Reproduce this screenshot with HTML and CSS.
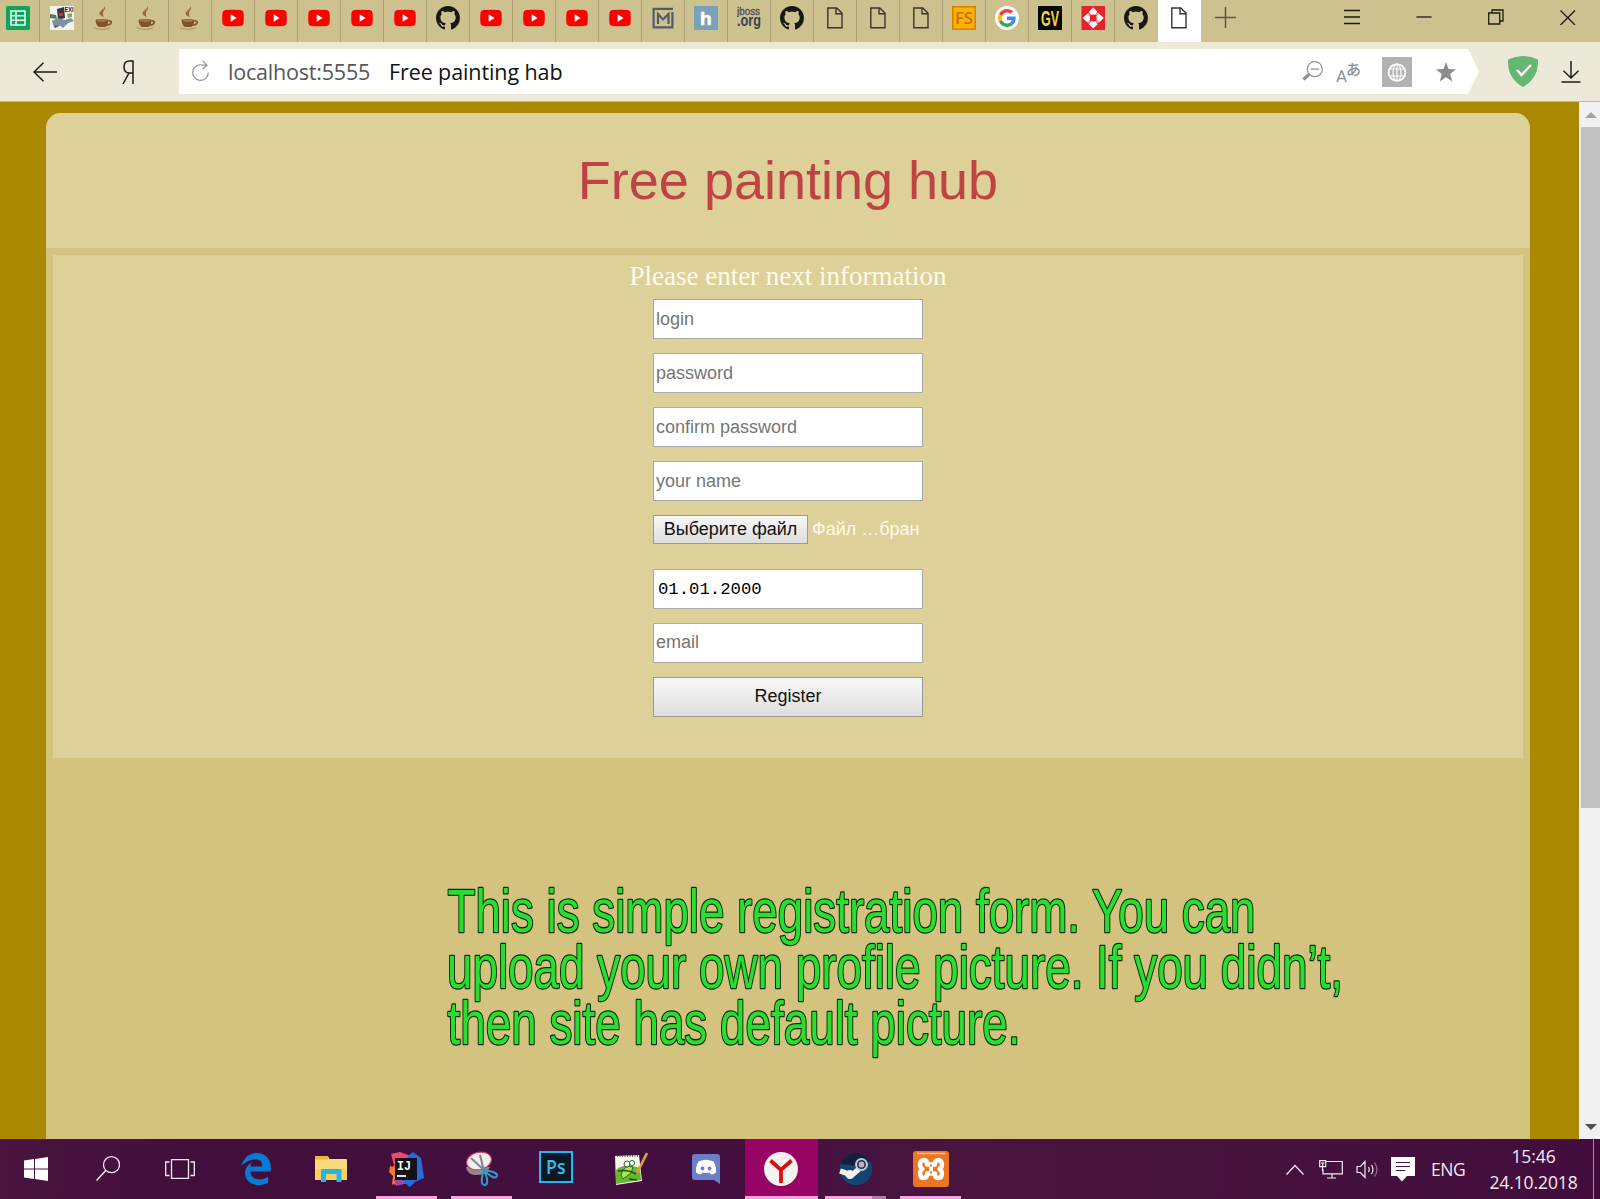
FILE: index.html
```html
<!DOCTYPE html>
<html lang="en">
<head>
<meta charset="utf-8">
<title>Free painting hab</title>
<link rel="stylesheet" href="styles.css">
</head>
<body>
<svg class="defs" width="0" height="0" aria-hidden="true">
  <symbol id="cup" viewBox="0 0 24 24">
    <path d="M12.500 0c2 3-1 4-1.500 6.500-.4 2 .5 3 .5 4.500-3-1.500-5-2.700-3.500-5C9.500 3.800 12.500 3 12.500 0z" fill="#9a6a3c"/>
    <path d="M3.500 14c3-1.200 10-1.200 13 0-.3 4-1.500 6.500-3.500 7h-6C5 20 3.800 17.500 3.500 14z" fill="#80542b"/>
    <path d="M16.500 15c4-1 4 3.500-1.500 4.200" fill="none" stroke="#80542b" stroke-width="1.600"/>
    <ellipse cx="10" cy="14.500" rx="5" ry="1.200" fill="#a9794b"/>
    <path d="M1.500 21c4 2.500 13 2.500 17 0-1 3.500-16 3.500-17 0z" fill="#a37a4c"/>
  </symbol>
  <symbol id="yt" viewBox="0 0 24 24">
    <path d="M4.200 4q7.800-.5 15.600 0 2.500.3 2.800 3 .4 5 0 10-.3 2.700-2.800 3-7.800.5-15.600 0-2.500-.3-2.800-3-.4-5 0-10Q1.700 4.300 4.200 4z" fill="#fd0000"/>
    <path d="M9.700 8.200v7.600l5.900-3.800z" fill="#fff"/>
  </symbol>
  <symbol id="gh" viewBox="0 0 16 16">
    <path fill="#1b1813" d="M8 0C3.580 0 0 3.580 0 8c0 3.540 2.290 6.530 5.470 7.590.4.070.55-.17.55-.38 0-.19-.01-.82-.01-1.490-2.010.37-2.530-.49-2.690-.94-.09-.23-.48-.94-.82-1.130-.28-.15-.68-.52-.01-.53.63-.01 1.080.58 1.230.82.72 1.210 1.870.87 2.330.66.07-.52.28-.87.51-1.070-1.780-.2-3.640-.89-3.640-3.950 0-.87.31-1.590.82-2.150-.08-.2-.36-1.020.08-2.120 0 0 .67-.21 2.200.82.64-.18 1.320-.27 2-.27s1.360.09 2 .27c1.530-1.040 2.200-.82 2.200-.82.44 1.100.16 1.920.08 2.120.51.56.82 1.270.82 2.150 0 3.070-1.870 3.750-3.650 3.950.29.25.54.73.54 1.480 0 1.070-.01 1.930-.01 2.200 0 .21.150.46.55.38A8.010 8.010 0 0 0 16 8c0-4.420-3.580-8-8-8z"/>
  </symbol>
  <symbol id="doc" viewBox="0 0 24 24">
    <path d="M4.800 2h9l5.200 5v14.700H4.800zM13 2v5.800h6" fill="none" stroke="#3a352a" stroke-width="1.400"/>
  </symbol>
</svg>

<div class="screen">
  <nav class="tabs">
    <div class="tab tab-first"><svg viewBox="0 0 24 24"><rect width="24" height="24" rx="1.500" fill="#0fa45c"/><path d="M5 5h14v14H5zM5 9.700h14M5 14.300h14M10 5v14" fill="none" stroke="#e8f8ee" stroke-width="1.600"/></svg></div>
    <div class="tab tab-second"><svg viewBox="0 0 24 24"><rect width="24" height="24" fill="#f1f1ef"/><path d="M7 3l7-2 1 11-7 2z" fill="#353849"/><path d="M0 8l6 1 1 4-7-1z" fill="#567a55"/><path d="M9 7h4v3H9z" fill="#e22b2b"/><path d="M2 15l6-3 7 2 6-2 3 3-6 2-5 5-3-3-6 2z" fill="#7d8fa0"/><path d="M17 8l5-1v4l-4 1z" fill="#78b04a"/><path d="M4 20l7-1-6 3z" fill="#3d5366"/><text x="14.500" y="6" font-family="Liberation Sans" font-size="6.500" font-weight="700" fill="#222" textLength="9" lengthAdjust="spacingAndGlyphs">EXI</text></svg></div>
    <div class="tab"><svg><use href="#cup"/></svg></div>
    <div class="tab"><svg><use href="#cup"/></svg></div>
    <div class="tab"><svg><use href="#cup"/></svg></div>
    <div class="tab"><svg><use href="#yt"/></svg></div>
    <div class="tab"><svg><use href="#yt"/></svg></div>
    <div class="tab"><svg><use href="#yt"/></svg></div>
    <div class="tab"><svg><use href="#yt"/></svg></div>
    <div class="tab"><svg><use href="#yt"/></svg></div>
    <div class="tab"><svg><use href="#gh"/></svg></div>
    <div class="tab"><svg><use href="#yt"/></svg></div>
    <div class="tab"><svg><use href="#yt"/></svg></div>
    <div class="tab"><svg><use href="#yt"/></svg></div>
    <div class="tab"><svg><use href="#yt"/></svg></div>
    <div class="tab"><svg viewBox="0 0 24 24"><path d="M22 2.800H2.600v18.600h18.800V6M7 18V8l5 5.500L17.500 8v10" fill="none" stroke="#535a67" stroke-width="2.200"/></svg></div>
    <div class="tab"><svg viewBox="0 0 24 24"><rect width="24" height="24" fill="#77a2b8"/><text x="6" y="18.500" font-family="Liberation Sans" font-weight="700" font-size="19" fill="#fff" stroke="#fff" stroke-width=".6">h</text></svg></div>
    <div class="tab"><svg viewBox="0 0 24 24"><text x="0" y="9" font-family="Liberation Sans" font-size="11.500" fill="#454b54" stroke="#454b54" stroke-width=".3" textLength="23" lengthAdjust="spacingAndGlyphs">jboss</text><text x="0" y="19.500" font-family="Liberation Sans" font-size="16" font-weight="700" fill="#39414d" textLength="24" lengthAdjust="spacingAndGlyphs">.org</text></svg></div>
    <div class="tab"><svg><use href="#gh"/></svg></div>
    <div class="tab"><svg><use href="#doc"/></svg></div>
    <div class="tab"><svg><use href="#doc"/></svg></div>
    <div class="tab"><svg><use href="#doc"/></svg></div>
    <div class="tab"><svg viewBox="0 0 24 24"><rect x=".8" y=".8" width="22.400" height="22.400" fill="#fdb400" stroke="#e08000" stroke-width="1.600"/><text x="3" y="18" font-family="Open Sans" font-size="16.500" font-weight="600" fill="#c96a08" textLength="18" lengthAdjust="spacingAndGlyphs">FS</text></svg></div>
    <div class="tab"><svg viewBox="-8 -8 64 64"><circle cx="24" cy="24" r="32" fill="#fff"/><path fill="#EA4335" d="M24 9.500c3.540 0 6.710 1.220 9.210 3.600l6.850-6.850C35.900 2.380 30.470 0 24 0 14.620 0 6.510 5.380 2.560 13.220l7.980 6.190C12.430 13.720 17.740 9.500 24 9.500z"/><path fill="#4285F4" d="M46.980 24.550c0-1.570-.15-3.090-.38-4.550H24v9.020h12.940c-.58 2.960-2.260 5.480-4.780 7.180l7.730 6c4.510-4.180 7.090-10.360 7.090-17.650z"/><path fill="#FBBC05" d="M10.530 28.590c-.48-1.450-.76-2.990-.76-4.590s.27-3.140.76-4.590l-7.980-6.190C.92 16.460 0 20.120 0 24c0 3.880.92 7.540 2.560 10.780l7.970-6.190z"/><path fill="#34A853" d="M24 48c6.480 0 11.930-2.130 15.890-5.810l-7.730-6c-2.150 1.450-4.920 2.300-8.160 2.300-6.260 0-11.570-4.220-13.470-9.910l-7.980 6.190C6.510 42.620 14.620 48 24 48z"/></svg></div>
    <div class="tab"><svg viewBox="0 0 24 24"><rect width="24" height="24" fill="#060603"/><text x="3" y="20" font-family="Liberation Sans" font-weight="700" font-size="22" fill="#f0dc3c" textLength="18" lengthAdjust="spacingAndGlyphs">GV</text></svg></div>
    <div class="tab"><svg viewBox="0 0 24 24"><rect x=".5" width="23.500" height="24" fill="#e6222c"/><path d="M12.200 1.500l4.300 4.200-2.300 3.300h-4L8 5.700zM12.200 22.500l4.300-4.200-2.300-3.300h-4L8 18.300zM1.700 12l4.500-4.300 3 2.300v4l-3 2.300zM22.800 12l-4.500-4.300-3 2.300v4l3 2.300z" fill="#fff"/><circle cx="12.200" cy="12" r="3.400" fill="#e6222c"/><path d="M7 7l2 2M17.400 7l-2 2M7 17l2-2M17.400 17l-2-2" stroke="#f6b0b3" stroke-width="1.400"/></svg></div>
    <div class="tab tab-last"><svg><use href="#gh"/></svg></div>
    <div class="tab tab-active"><svg><use href="#doc"/></svg></div>
    <svg class="new-tab" viewBox="0 0 20 20"><path d="M10 0v20M0 10h20" stroke="#5e563d" stroke-width="1.400"/></svg>
    <div class="window-controls">
      <svg viewBox="0 0 16 16"><path d="M0 1.500h16M0 8h16M0 14.500h16" stroke="#1e1b12" stroke-width="1.300"/></svg>
      <svg viewBox="0 0 16 16"><path d="M.5 8h15" stroke="#1e1b12" stroke-width="1.300"/></svg>
      <svg viewBox="0 0 16 16"><path d="M.7 4h11v11H.7zM4 4V1h11v11h-3" fill="none" stroke="#1e1b12" stroke-width="1.300"/></svg>
      <svg viewBox="0 0 16 16"><path d="M.5 1.500l14.500 14.500M15 1.500L.5 16" stroke="#1e1b12" stroke-width="1.300"/></svg>
    </div>
  </nav>

  <div class="toolbar">
    <svg class="back" viewBox="0 0 24 20"><path d="M24 10H1M10.500.7L1 10l9.500 9.300" fill="none" stroke="#1d1b17" stroke-width="1.500"/></svg>
    <svg class="ya" viewBox="0 0 12 24"><path d="M11 24V1H7.500Q2 1 2 7t5.500 6H11M7 13L1 24" fill="none" stroke="#1d1b17" stroke-width="1.500"/></svg>
    <div class="omnibox">
      <svg class="reload" viewBox="0 0 18 22"><path d="M16.300 12.500A7.800 7.800 0 1 1 11 5.200H15M10.500.6L15 5.200 10.500 9" fill="none" stroke="#96928d" stroke-width="1.200"/></svg>
      <span class="url">localhost:5555</span>
      <span class="page-name">Free painting hab</span>
      <div class="page-actions">
        <svg width="22" height="22" viewBox="0 0 22 22"><circle cx="12.800" cy="8.200" r="7.500" fill="none" stroke="#8f8f8f" stroke-width="1.200"/><path d="M8.500 8.200h8.600" stroke="#8f8f8f" stroke-width="1.300"/><path d="M7 13.500l-5.500 5" stroke="#8f8f8f" stroke-width="3.200"/></svg>
        <svg width="26" height="24" viewBox="0 0 26 24"><text x="0" y="22" font-family="Roboto" font-size="17" fill="#8f8f8f">A</text><text x="10" y="14.500" font-family="Noto Sans CJK JP" font-size="15" font-weight="500" fill="#8f8f8f">あ</text></svg>
        <svg width="30" height="30" viewBox="0 0 30 30"><path d="M0 0h30v30H0z" fill="#b2b2b2"/><g fill="none" stroke="#fff" stroke-width="1.200"><circle cx="15" cy="15.500" r="8.400" stroke-width="1.700"/><ellipse cx="15" cy="15.500" rx="4" ry="8.400"/><path d="M15 7v17M7.500 12h15M7.500 19h15"/></g></svg>
        <svg width="20" height="20" viewBox="0 0 20 20"><path d="M10 0l2.600 7.100 7.400.4-5.800 4.600 2 7.300L10 15.300l-6.200 4.100 2-7.300L0 7.500l7.400-.4z" fill="#8c8c8c"/></svg>
      </div>
    </div>
    <svg class="shield" viewBox="0 0 30 31"><path d="M15 0Q23 .2 30 3.500 31 22 15 31-1 22 0 3.500 7 .2 15 0z" fill="#65b772"/><path d="M9 14l4.500 5L23 9" fill="none" stroke="#fff" stroke-width="2.400"/></svg>
    <svg class="download" viewBox="0 0 20 22"><path d="M10 0v17M2.500 9.700L10 17l7.500-7.300M.5 21h19" fill="none" stroke="#1d1b17" stroke-width="1.500"/></svg>
  </div>

  <main class="viewport">
    <div class="page">
      <div class="container">
        <header class="header"><h1>Free painting hub</h1></header>
        <form class="panel">
          <p class="prompt">Please enter next information</p>
          <input class="field" type="text" placeholder="login">
          <input class="field" type="text" placeholder="password">
          <input class="field" type="text" placeholder="confirm password">
          <input class="field" type="text" placeholder="your name">
          <div class="file-row"><button class="file-button" type="button">Выберите файл</button><span class="file-name">Файл …бран</span></div>
          <input class="field field-date" type="text" value="01.01.2000">
          <input class="field field-email" type="text" placeholder="email">
          <button class="submit" type="button">Register</button>
        </form>
      </div>
      <svg class="caption" width="920" height="190" viewBox="0 0 920 190">
        <text x="6.500" y="61" textLength="808" lengthAdjust="spacingAndGlyphs">This is simple registration form. You can</text>
        <text x="6" y="117" textLength="896" lengthAdjust="spacingAndGlyphs">upload your own profile picture. If you didn’t,</text>
        <text x="6.500" y="173" textLength="573" lengthAdjust="spacingAndGlyphs">then site has default picture.</text>
      </svg>
    </div>
    <div class="scrollbar">
      <div class="arrow arrow-up"></div>
      <div class="thumb"></div>
      <div class="arrow arrow-down"></div>
    </div>
  </main>

  <footer class="taskbar">
    <div class="task wide"><svg width="24" height="24" viewBox="0 0 24 24"><path d="M0 3.500L10 2v9.500H0zM11 1.900L24 0v11.500H11zM0 12.500h10V22L0 20.500zM11 12.500h13V24l-13-1.900z" fill="#fff"/></svg></div>
    <div class="task wide"><svg width="24" height="25" viewBox="0 0 24 25"><circle cx="15.500" cy="8.700" r="8" fill="none" stroke="#f4e9f2" stroke-width="1.300"/><path d="M9.800 14.500L.5 24.500" stroke="#f4e9f2" stroke-width="1.500"/></svg></div>
    <div class="task wide"><svg width="30" height="20" viewBox="0 0 30 20"><path d="M6.500.7h17v18.600h-17zM4.500 3H.7v13.500h3.800M25.500 3h3.800v13.500h-3.800" fill="none" stroke="#f4e9f2" stroke-width="1.300"/></svg></div>
    <div class="task first-app"><svg width="30" height="32" viewBox="0 0 90 97"><path d="M0 40C8 12 28 0 47 0 72 0 90 18 90 42V56H28C28 72 42 80 55 80 66 80 74 77 82 72V90C74 95 62 97 52 97 28 97 12 82 12 60 12 44 22 34 34 27 30 32 28 37 28 41H64C64 28 58 20 45 20 28 20 10 28 0 40z" fill="#087bd5"/></svg></div>
    <div class="task nudge"><svg width="32" height="28" viewBox="0 0 32 28"><path d="M0 2q0-1 1-1h11q1 0 1.500 1l1 2H31q1 0 1 1v20H0z" fill="#fadb79"/><path d="M0 2q0-1 1-1h11q1 0 1.500 1l-1 2.500H0z" fill="#e8b83c"/><path d="M0 25V14h32v11z" fill="#f8d060"/><path d="M6 27V15q0-1 1-1h18.500q1 0 1 1v12h-5v-8H11v8z" fill="#28b2e6"/></svg></div>
    <div class="task running nudge"><svg width="36" height="36" viewBox="0 0 36 36"><path d="M3 3l9-2 11 4-4 24-13 5 1-9-5-5 4-6z" fill="#ee4a70"/><path d="M2 15l7 2v14l-5 3 1-9-4-4z" fill="#f6782d"/><path d="M6 28l10-2 4 6-12 3z" fill="#a04b9c"/><path d="M20 5l5-4 8 6 3 20-9 4-5 5-8-6z" fill="#286be0"/><rect x="7" y="7" width="22" height="22" fill="#151317"/><text x="9" y="19" font-family="Liberation Mono" font-weight="700" font-size="13.500" fill="#fff" textLength="14" lengthAdjust="spacingAndGlyphs">IJ</text><path d="M9 25h9" stroke="#fff" stroke-width="1.800"/></svg></div>
    <div class="task running nudge"><svg width="36" height="36" viewBox="0 0 36 36"><path d="M3 16q1 7 9 8 11 1 15-8z" fill="#94898f"/><ellipse cx="16" cy="10" rx="12.500" ry="8.700" transform="rotate(-13 16 10)" fill="#f2eef0" stroke="#c94462" stroke-width="1.200"/><path d="M8 7l14 13M17 4l4 16" stroke="#7f858d" stroke-width="2"/><path d="M21 19q-5 15 1 15 5-1-1-15zM21 19q11 11 13 6 1-4-13-6z" fill="none" stroke="#2c9dc9" stroke-width="2"/></svg></div>
    <div class="task nudge"><svg class="raised" width="34" height="32" viewBox="0 0 34 32"><rect x="1" y="1" width="32" height="30" fill="#0b1627" stroke="#26b8ea" stroke-width="2"/><text x="7" y="22.500" font-family="Open Sans" font-size="19" font-weight="600" fill="#2fc3ee" textLength="19.500" lengthAdjust="spacingAndGlyphs">Ps</text></svg></div>
    <div class="task nudge"><svg width="34" height="34" viewBox="0 0 34 34"><path d="M1 4l24-1 3 26-26 4z" fill="#f4f7ea"/><path d="M2 18q8-8 24-2l1 12-25 4z" fill="#64b832"/><path d="M7 23q3-11 12-8l-2 6-8 6z" fill="#afe94c" stroke="#2e681b"/><circle cx="13" cy="12" r="3" fill="#fff" stroke="#34602a"/><circle cx="18" cy="11" r="2.500" fill="#fff" stroke="#34602a"/><path d="M4 19q10-2 18 3M15 27l8 1" stroke="#234c18" fill="none" stroke-width="1.500"/><path d="M3 4h22" stroke="#5b6756" stroke-width="2" stroke-dasharray="1 1.500"/><path d="M33 1L23 21" stroke="#dba13a" stroke-width="2.600"/></svg></div>
    <div class="task nudge"><svg width="28" height="30" viewBox="0 0 28 30"><path d="M3 0h22q3 0 3 3v27l-6-4H3q-3 0-3-3V3q0-3 3-3z" fill="#6a7fc4"/><path d="M9.500 6.500q4.500-1.500 9 0l3 1q3 4.500 2.500 11-2 2-5 2l-1.500-2q-3.500 1-7 0L9 20.500q-3 0-5-2-.5-6.500 2.500-11z" fill="#fff"/><circle cx="10.500" cy="14.500" r="1.900" fill="#6a7fc4"/><circle cx="17.500" cy="14.500" r="1.900" fill="#6a7fc4"/></svg></div>
    <div class="task active"><svg width="34" height="34" viewBox="0 0 34 34"><circle cx="17" cy="17" r="17" fill="#f5f2f2"/><path d="M6.500 8.500L17 18 27.500 8.500M17 17.500V31" fill="none" stroke="#d90f10" stroke-width="3.800"/></svg></div>
    <div class="task running grouped"><svg width="34" height="34" viewBox="0 0 34 34"><circle cx="17" cy="17" r="16.200" fill="#12466e"/><path d="M1.500 12A16.200 16.200 0 0 1 31 9L18 14z" fill="#141f3d"/><path d="M1 19l12 4 7-6" fill="none" stroke="#f1f1f3" stroke-width="5.500"/><circle cx="11" cy="22.500" r="4.500" fill="#f1f1f3"/><circle cx="22.500" cy="12.500" r="6.500" fill="#c9c6cf"/><circle cx="22.500" cy="12.500" r="3.700" fill="#b9b5c0" stroke="#203452" stroke-width="1.600"/></svg></div>
    <div class="task running"><svg width="36" height="36" viewBox="0 0 36 36"><rect width="36" height="36" rx="3" fill="#ec7520"/><path d="M4 2.500h28" stroke="#f8c89e" stroke-width="1.500"/><path d="M14 13.500q.5-4-3-4.500-4 0-4 4.500 0 3 2.500 4.500Q7 19.500 7 22.500q0 4.500 4 4.500 3.500-.5 3-4.500h8q-.5 4 3 4.500 4 0 4-4.500 0-3-2.500-4.500 2.500-1.500 2.500-4.500Q29 9 25 9q-3.500.5-3 4.500z" fill="none" stroke="#fff" stroke-width="4.400" stroke-linejoin="round"/><path d="M18 13.500v9" stroke="#ec7520" stroke-width="2"/><path d="M16 18h4" stroke="#fff" stroke-width="5"/></svg></div>
    <div class="tray">
      <svg width="18" height="11" viewBox="0 0 18 11"><path d="M.5 10.500L9 1.500l8.500 9" fill="none" stroke="#f0e2ee" stroke-width="1.400"/></svg>
      <svg class="t-net" width="24" height="19" viewBox="0 0 24 19"><path d="M7 1.500h16.300v12.300H4V9M13 14v4M8 18h9M.7.700h6v6h-6zM2 3h3.500M3.700 3v3M3.500 7v4" fill="none" stroke="#f4e9f2" stroke-width="1.200"/></svg>
      <svg class="t-vol" width="23" height="19" viewBox="0 0 23 19"><path d="M1 6.500h3.500l4.500-5v16l-4.500-5H1zM12.500 7q1.500 2.500 0 5M15.500 5q3 4.500 0 9" fill="none" stroke="#f4e9f2" stroke-width="1.200"/><path d="M18.500 2.500q5 7 0 14" fill="none" stroke="#94718f" stroke-width="1.200"/></svg>
      <svg class="t-msg" width="24" height="25" viewBox="0 0 24 25"><path d="M0 0h24v19h-8l-5 5.500L6 19H0z" fill="#fff"/><path d="M5 5.500h14M5 9.500h14M5 13.500h9" stroke="#43103e" stroke-width="1.200"/></svg>
      <span class="lang">ENG</span>
      <div class="clock"><span class="time">15:46</span><span class="date">24.10.2018</span></div>
      <div class="peek"></div>
    </div>
  </footer>
</div>
</body>
</html>
```
FILE: styles.css
```css
* { box-sizing: border-box; }
body { margin: 0; overflow: hidden; font-family: "Liberation Sans", Arial, sans-serif; }
svg { display: block; flex: none; }
.defs { position: absolute; }
.screen { width: 1600px; height: 1199px; display: flex; flex-direction: column; }

/* tab strip */
.tabs { height: 42px; display: flex; background: #cdc190; }
.tab { width: 43.030px; flex: none; height: 41.500px; padding: 6px 0 0 9px; border-right: 1px solid #ada276; }
.tab svg { width: 24px; height: 24px; }
.tab-first { width: 39.500px; padding-left: 6px; }
.tab-second { padding-left: 10px; }
.tab-last { border-right: 0; }
.tab-active { background: #fff; border-right: 0; }
.new-tab { width: 21px; height: 21px; margin: 7px 0 0 14px; }
.window-controls { display: flex; gap: 56px; margin: 9px 0 0 108px; }
.window-controls svg { width: 16px; height: 16px; }

/* address bar */
.toolbar { height: 60px; display: flex; align-items: center; background: #ece9d8; border-bottom: 1px solid #c4bb8c; font-family: "Open Sans", "Noto Sans", sans-serif; }
.back { width: 24px; height: 20px; margin-left: 33px; }
.ya { width: 12px; height: 24px; margin-left: 65px; }
.omnibox { width: 1300px; height: 45px; margin-left: 45px; padding: 0 23px 0 13px; display: flex; align-items: center; background: #fff; clip-path: polygon(0 0, 1289px 0, 100% 50%, 1289px 100%, 0 100%); font-size: 21.500px; white-space: nowrap; }
.reload { width: 18px; height: 22px; margin-top: -1px; }
.url { box-sizing: content-box; width: 143px; padding-left: 18px; color: #55565a; letter-spacing: -.2px; }
.page-name { margin-left: 18px; color: #111; letter-spacing: -.1px; }
.page-actions { margin-left: auto; display: flex; align-items: center; }
.page-actions svg:nth-child(2) { margin-left: 12px; }
.page-actions svg:nth-child(3) { margin-left: 20px; }
.page-actions svg:nth-child(4) { margin-left: 24px; }
.shield { width: 30px; height: 31px; margin-left: 29px; }
.download { width: 20px; height: 22px; margin-left: 23px; }

/* web page */
.viewport { height: 1037px; display: flex; background: #a80; }
.page { width: 1579px; position: relative; padding: 11px 49px 0 46px; }
.container { height: 1026px; background: #d4c37e; border-radius: 15px 15px 0 0; overflow: hidden; }
.header { height: 135px; padding-bottom: 2px; display: flex; align-items: center; justify-content: center; background: #ddd098; }
.header h1 { margin: 0; font-size: 54px; font-weight: 400; line-height: 62px; color: #c04343; }
.panel { height: 503px; margin: 7px 7px 0; padding-top: 7px; display: flex; flex-direction: column; align-items: center; background: #ddd098; }
.prompt { margin: 0 0 8px; font: 27px/29px "Liberation Serif", "Times New Roman", serif; color: #fffbea; }
.field { width: 270px; height: 40px; margin: 0 0 14px; padding: 0 2px; border: 1px solid #a9a9a9; border-radius: 0; background: #fff; font: 18px "Liberation Sans", Arial, sans-serif; color: #000; }
.field::placeholder { color: #757575; opacity: 1; }
.field-date { padding-left: 4px; font: 17.300px "Liberation Mono", monospace; }
.field-email { padding-bottom: 2px; }
.file-row { width: 270px; height: 29px; margin-bottom: 25px; display: flex; align-items: center; gap: 4px; font-size: 18px; color: #fffbea; white-space: nowrap; }
.file-button, .submit { padding: 0; border: 1px solid #999; border-radius: 0; background: linear-gradient(#f8f8f8, #ddd); font: 18px "Liberation Sans", Arial, sans-serif; color: #111; }
.file-button { width: 155px; height: 29px; }
.submit { width: 270px; height: 40px; padding-bottom: 2px; }

/* note laid over the page */
.caption { position: absolute; left: 441px; top: 769px; }
.caption text { font: 62px "Liberation Sans", Arial, sans-serif; fill: #28df31; stroke: #0a2a08; stroke-width: 2.600px; stroke-linejoin: round; paint-order: stroke; }

.scrollbar { width: 21px; display: flex; flex-direction: column; align-items: center; background: #f1f1f1; }
.arrow { border: 6px solid transparent; }
.arrow-up { border-bottom-color: #a3a3a3; border-top: 0; margin: 10px 0 9px 3px; }
.arrow-down { border-top-color: #505050; border-bottom: 0; margin: auto 0 9px 3px; }
.thumb { width: 19px; height: 681px; margin-left: 2px; background: #c1c1c1; }

/* taskbar */
.taskbar { height: 60px; display: flex; background: linear-gradient(90deg, #4a133f, #420f3d 12%, #440f3f 45%, #49153f 60%, #420d3c 100%); }
.task { width: 75px; padding-bottom: 1px; display: flex; align-items: center; justify-content: center; }
.task.wide { width: 72px; }
.task.first-app { width: 79px; }
.nudge { padding-right: 3px; }
.running { background: linear-gradient(#f5a3df, #f5a3df) 50% 100% / 61px 3px no-repeat; }
.running.nudge { background-position: 6px 100%; }
.grouped { background: linear-gradient(90deg, #f5a3df 47px, #b67aa9 47px) 50% 100% / 61px 3px no-repeat; }
.active { width: 73px; background: #970466; border-bottom: 3px solid #f5a3df; padding: 2px 2px 0 0; }
.raised { margin-top: -3px; }
.tray { margin-left: auto; display: flex; align-items: center; color: #f6e9f4; font-family: "Open Sans", "Noto Sans", sans-serif; font-size: 17.500px; }
.t-net { margin-left: 15px; }
.t-vol { margin-left: 13px; }
.t-msg { margin-left: 12px; }
.lang { width: 34px; margin-left: 16px; letter-spacing: -.5px; }
.clock { width: 91px; margin-left: 23px; display: flex; flex-direction: column; align-items: center; line-height: 26px; letter-spacing: -.1px; }
.clock .time { margin-top: -1px; }
.peek { width: 1px; height: 60px; margin: 0 6px 0 14px; background: #a98aa5; }
```
